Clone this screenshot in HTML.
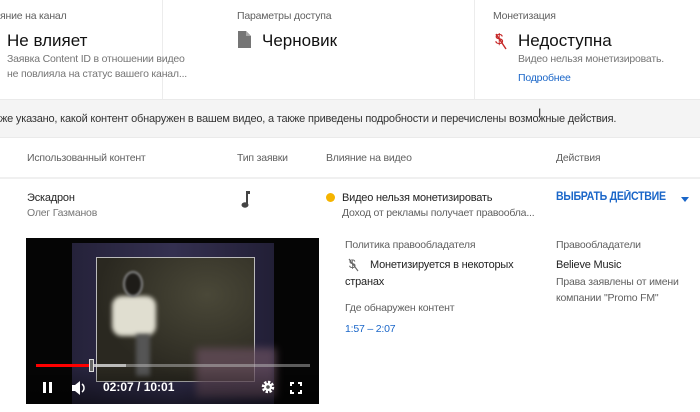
<!DOCTYPE html>
<html><head><meta charset="utf-8"><style>
*{margin:0;padding:0;box-sizing:border-box}
body{width:700px;height:412px;overflow:hidden;background:#fff;font-family:"Liberation Sans","Noto Sans CJK SC",sans-serif;color:#222;position:relative}
.a{position:absolute;white-space:nowrap}
.s{font-size:10.5px;color:#606060;letter-spacing:-0.2px}
.g{color:#757575}
.b{color:#1a66c8}
.big{font-size:17px;color:#111}
.t{font-size:11px;color:#222;letter-spacing:-0.2px}
</style></head><body>
<!-- top cards -->
<div class="a" style="left:162px;top:0;width:1px;height:99px;background:#ececec"></div>
<div class="a" style="left:474px;top:0;width:1px;height:99px;background:#ececec"></div>
<div class="a s" style="left:0;top:10px">яние на канал</div>
<div class="a big" style="left:7px;top:31px">Не влияет</div>
<div class="a s g" style="left:7px;top:53px">Заявка Content ID в отношении видео</div>
<div class="a s g" style="left:7px;top:68px">не повлияла на статус вашего канал...</div>
<div class="a s" style="left:237px;top:10px">Параметры доступа</div>
<svg class="a" style="left:238px;top:31px" width="13" height="17" viewBox="0 0 13 17"><path d="M0 0h8l5 5v12H0z" fill="#757575"/><path d="M8 0v5h5" fill="#aaa"/></svg>
<div class="a big" style="left:262px;top:31px">Черновик</div>
<div class="a s" style="left:493px;top:10px">Монетизация</div>
<div class="a" style="left:495px;top:31px;color:#c62828;font-size:15px">$</div>
<svg class="a" style="left:494px;top:33px" width="14" height="18"><line x1="2" y1="1" x2="12" y2="16" stroke="#c62828" stroke-width="1.4"/></svg>
<div class="a big" style="left:518px;top:31px">Недоступна</div>
<div class="a s g" style="left:518px;top:53px">Видео нельзя монетизировать.</div>
<div class="a s b" style="left:518px;top:72px">Подробнее</div>
<!-- info band -->
<div class="a" style="left:0;top:99px;width:700px;height:39px;background:#f4f4f4;border-top:1px solid #eaeaea;border-bottom:1px solid #eaeaea"></div>
<div class="a t" style="left:0;top:113px;color:#333">же указано, какой контент обнаружен в вашем видео, а также приведены подробности и перечислены возможные действия.</div>
<div class="a" style="left:538px;top:106px;font-size:12px;color:#333">I</div>
<!-- header -->
<div class="a s" style="left:27px;top:152px">Использованный контент</div>
<div class="a s" style="left:237px;top:152px">Тип заявки</div>
<div class="a s" style="left:326px;top:152px">Влияние на видео</div>
<div class="a s" style="left:556px;top:152px">Действия</div>
<div class="a" style="left:0;top:177px;width:700px;height:2px;background:#f0f0f0"></div>
<!-- row -->
<div class="a t" style="left:27px;top:192px">Эскадрон</div>
<div class="a s g" style="left:27px;top:207px">Олег Газманов</div>
<svg class="a" style="left:240px;top:190px" width="12" height="18"><rect x="6" y="2" width="2" height="13" fill="#444"/><rect x="6" y="1" width="4" height="3" fill="#444"/><ellipse cx="5" cy="15" rx="3.5" ry="2.7" fill="#444"/></svg>
<div class="a" style="left:326px;top:193px;width:9px;height:9px;border-radius:50%;background:#f5b400"></div>
<div class="a t" style="left:342px;top:192px">Видео нельзя монетизировать</div>
<div class="a s" style="left:342px;top:207px">Доход от рекламы получает правообла...</div>
<div class="a" style="left:556px;top:191px;font-size:11.5px;font-weight:bold;color:#1a66c8;letter-spacing:-0.3px;transform:scaleX(0.92);transform-origin:left">ВЫБРАТЬ ДЕЙСТВИЕ</div>
<div class="a" style="left:681px;top:197px;width:0;height:0;border-left:4px solid transparent;border-right:4px solid transparent;border-top:5px solid #1a66c8"></div>
<!-- details -->
<div class="a s" style="left:345px;top:239px">Политика правообладателя</div>
<div class="a" style="left:349px;top:257px;color:#666;font-size:12px">$</div>
<svg class="a" style="left:347px;top:258px" width="12" height="14"><line x1="2" y1="1" x2="11" y2="13" stroke="#666" stroke-width="1.1"/></svg>
<div class="a t" style="left:370px;top:259px">Монетизируется в некоторых</div>
<div class="a t" style="left:345px;top:276px">странах</div>
<div class="a s" style="left:345px;top:302px">Где обнаружен контент</div>
<div class="a s b" style="left:345px;top:323px">1:57 – 2:07</div>
<div class="a s" style="left:556px;top:239px">Правообладатели</div>
<div class="a t" style="left:556px;top:259px">Believe Music</div>
<div class="a s" style="left:556px;top:276px">Права заявлены от имени</div>
<div class="a s" style="left:556px;top:292px">компании "Promo FM"</div>
<!-- video -->
<div class="a" style="left:26px;top:238px;width:293px;height:166px;background:#050505;overflow:hidden">
 <div class="a" style="left:46px;top:5px;width:202px;height:161px;background:linear-gradient(90deg,#25223a,#343050 50%,#221f36)"></div>
 <div class="a" style="left:70px;top:19px;width:159px;height:125px;border:1.5px solid #bbb;background:radial-gradient(ellipse at 70% 30%,#4a4838,#2a2820 70%)"></div>
 <div class="a" style="left:86px;top:58px;width:44px;height:40px;background:#e0ded0;border-radius:10px;filter:blur(2px)"></div>
 <div class="a" style="left:97px;top:33px;width:20px;height:26px;background:#1e1c18;border:2px solid #888;border-radius:50%;filter:blur(1px)"></div>
 <div class="a" style="left:110px;top:96px;width:14px;height:42px;background:#555;filter:blur(2px)"></div>
 <div class="a" style="left:170px;top:110px;width:80px;height:50px;background:#6a5060;opacity:.7;filter:blur(4px)"></div>
 <div class="a" style="left:0;top:130px;width:293px;height:36px;background:linear-gradient(transparent,rgba(0,0,0,.5))"></div>
 <div class="a" style="left:10px;top:126px;width:274px;height:3px;background:rgba(200,200,200,.45)"></div>
 <div class="a" style="left:10px;top:126px;width:90px;height:3px;background:rgba(220,220,220,.7)"></div>
 <div class="a" style="left:10px;top:126px;width:56px;height:3px;background:#f00"></div>
 <div class="a" style="left:63px;top:121px;width:5px;height:13px;border:1px solid #ddd;background:#666"></div>
 <div class="a" style="left:17px;top:144px;width:3px;height:11px;background:#fff"></div>
 <div class="a" style="left:23px;top:144px;width:3px;height:11px;background:#fff"></div>
 <svg class="a" style="left:46px;top:143px" width="16" height="14"><path d="M0 4h3l5-4v14l-5-4H0z" fill="#fff"/><path d="M10 3a5 5 0 0 1 0 8" stroke="#fff" stroke-width="1.5" fill="none"/></svg>
 <div class="a" style="left:77px;top:142px;color:#fff;font-size:12px;font-weight:bold">02:07 / 10:01</div>
 <svg class="a" style="left:235px;top:142px" width="14" height="14" viewBox="0 0 14 14"><circle cx="7" cy="7" r="4.5" fill="none" stroke="#fff" stroke-width="3.5" stroke-dasharray="2.2 1.3"/><circle cx="7" cy="7" r="4" fill="#fff"/><circle cx="7" cy="7" r="1.8" fill="#555"/></svg>
 <svg class="a" style="left:264px;top:144px" width="12" height="12"><path d="M1 4V1h3M8 1h3v3M11 8v3H8M4 11H1V8" stroke="#fff" stroke-width="2" fill="none"/></svg>
</div>
</body></html>
